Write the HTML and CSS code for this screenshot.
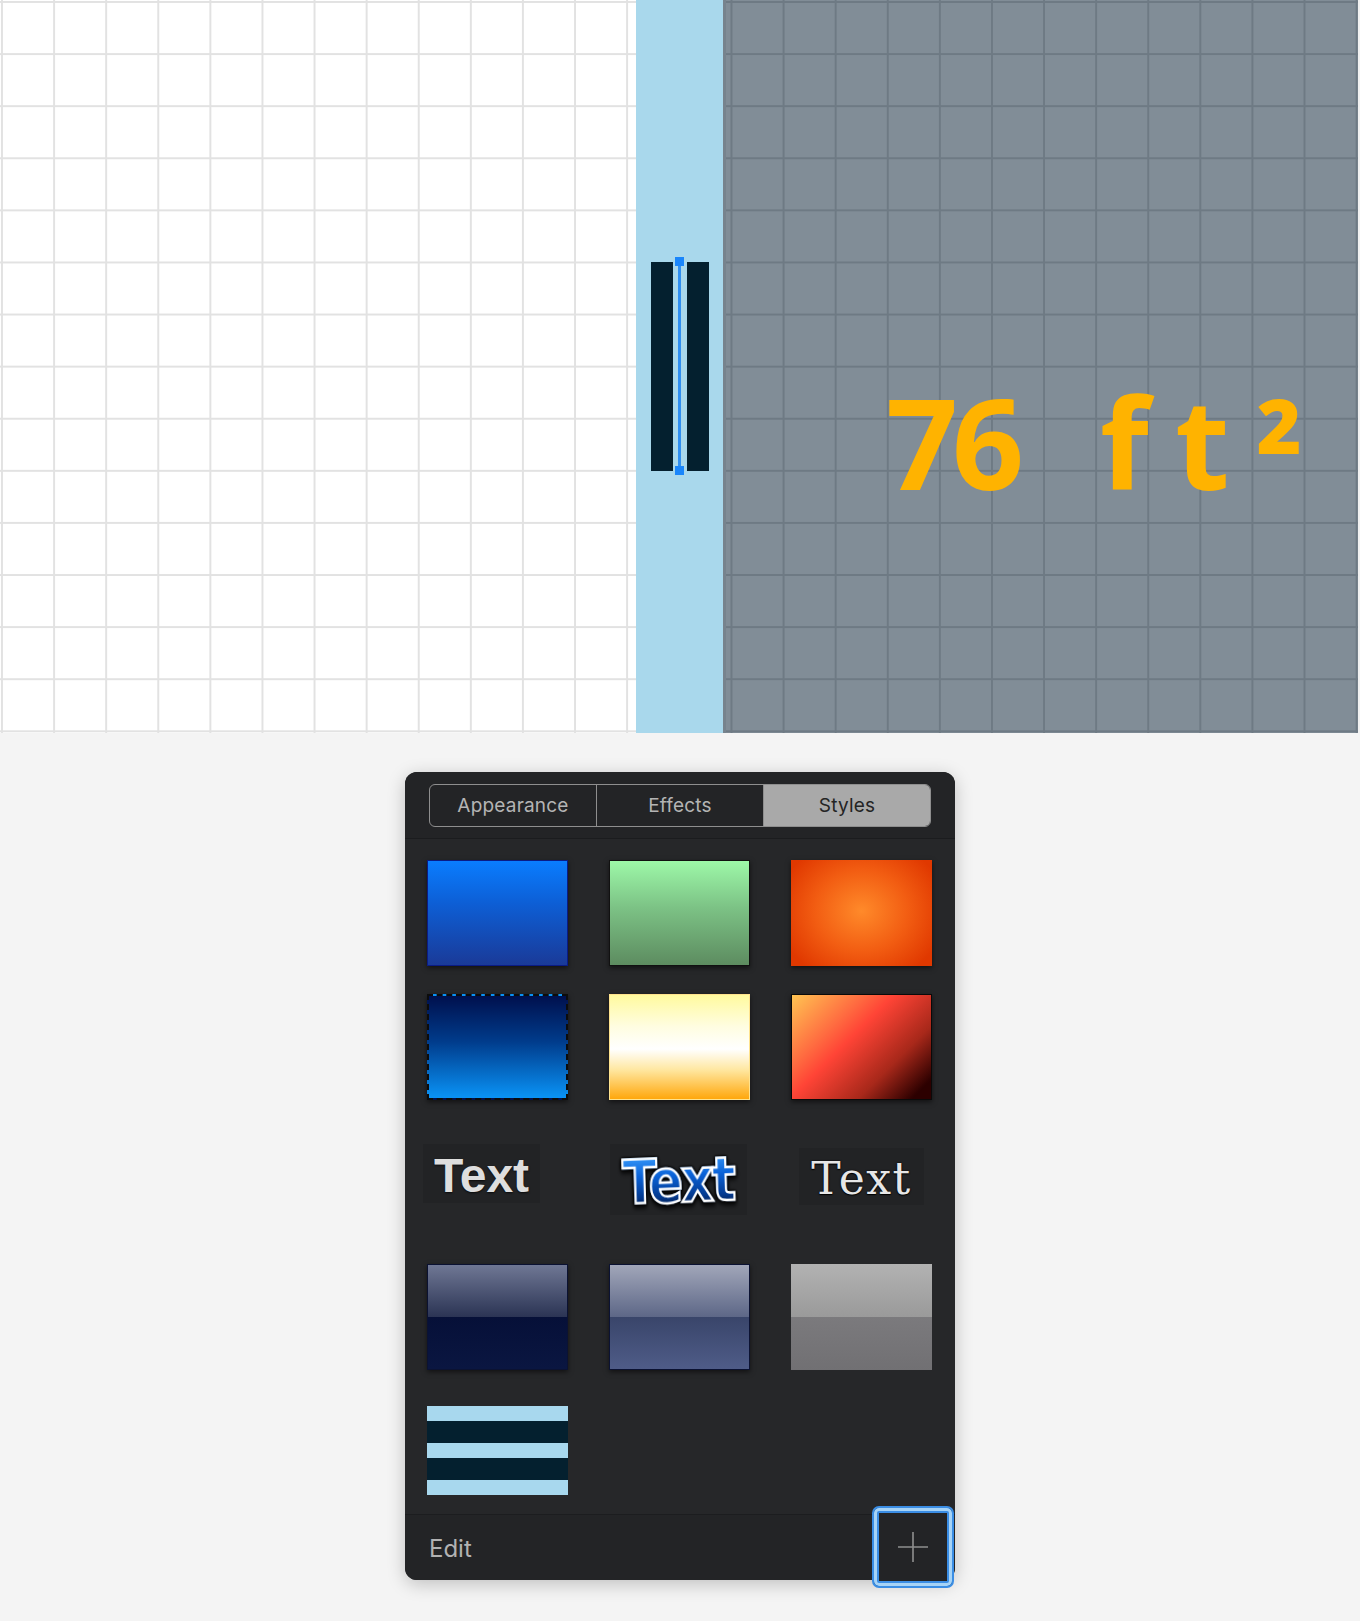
FILE: index.html
```html
<!DOCTYPE html>
<html lang="en">
<head>
<meta charset="utf-8">
<title>Styles</title>
<link rel="stylesheet" href="styles.css">
</head>
<body>
<div class="canvas">
  <div class="floor"></div>
  <div class="wall-zone">
    <div class="wall">
      <div class="wall-bar"></div>
      <div class="wall-bar"></div>
      <div class="sel-line"></div>
      <div class="handle handle-top"></div>
      <div class="handle handle-bottom"></div>
    </div>
  </div>
  <div class="room"></div>
  <div class="edge"></div>
  <div class="area-label"><span class="num">76</span><span class="unit">ft</span><span class="sup">²</span></div>
</div>

<div class="panel">
  <div class="panel-head">
    <div class="segmented">
      <div class="seg">Appearance</div>
      <div class="seg">Effects</div>
      <div class="seg seg-on">Styles</div>
    </div>
  </div>
  <div class="panel-body">
    <div class="swatches">
      <div class="sw sw-blue"></div>
      <div class="sw sw-green"></div>
      <div class="sw sw-orange"></div>
      <div class="sw sw-deep"></div>
      <div class="sw sw-cream"></div>
      <div class="sw sw-fire"></div>
      <div class="cell cell-1"><div class="tbox tbox-1"><span class="t-bold">Text</span></div></div>
      <div class="cell cell-2"><div class="tbox tbox-2"><span class="t-comic">Text</span></div></div>
      <div class="cell cell-3"><div class="tbox tbox-3"><span class="t-serif">Text</span></div></div>
      <div class="sw sw-navy"></div>
      <div class="sw sw-slate"></div>
      <div class="sw sw-grey"></div>
      <div class="cell cell-stripes"><div class="stripes"><div class="st st-l"></div><div class="st st-d"></div><div class="st st-l"></div><div class="st st-d"></div><div class="st st-l"></div></div></div>
    </div>
  </div>
  <div class="panel-foot">
    <span class="edit">Edit</span>
    <div class="add-btn">
      <svg width="32" height="32" viewBox="0 0 32 32"><path d="M16 1v30M1 16h30" stroke="#8f8f8f" stroke-width="1.6" fill="none"/></svg>
    </div>
  </div>
</div>
</body>
</html>
```

FILE: styles.css
```css
html, body {
  margin: 0;
  padding: 0;
}
body {
  background: #f4f4f4;
  width: 1360px;
  height: 1621px;
  overflow: hidden;
  font-family: Inter, "Noto Sans", sans-serif;
}

.canvas {
  position: relative;
  display: flex;
  width: 1360px;
  height: 733px;
  background: #fff;
}
.floor {
  flex: 0 0 636px;
  background-color: #fff;
  background-image:
    linear-gradient(90deg, #e2e2e2 2px, transparent 2px),
    linear-gradient(180deg, #e2e2e2 2px, transparent 2px);
  background-size: 52.1px 52.1px;
  background-position: 1px 1px;
}
.wall-zone {
  position: relative;
  flex: 0 0 87px;
  background: #a9d8ec;
}
.room {
  flex: 0 0 635px;
  background-color: #818d97;
  background-image:
    linear-gradient(90deg, #6e7a84 2px, transparent 2px),
    linear-gradient(180deg, #6e7a84 2px, transparent 2px);
  background-size: 52.1px 52.1px;
  background-position: 7.5px 1px;
  box-shadow: inset 3px 0 0 #77838d;
}
.edge {
  flex: 1;
  background: #f2f2f2;
}

.wall {
  position: absolute;
  left: 15px;
  top: 262px;
  width: 58px;
  height: 209px;
  display: flex;
  justify-content: space-between;
}
.wall-bar {
  width: 22px;
  height: 100%;
  background: #04202f;
}
.sel-line {
  position: absolute;
  left: 27px;
  top: 0;
  width: 3px;
  height: 100%;
  background: #2f8ff2;
}
.handle {
  position: absolute;
  left: 24px;
  width: 9px;
  height: 9px;
  background: #1a86fb;
}
.handle-top { top: -5px; }
.handle-bottom { bottom: -4px; }

.area-label {
  position: absolute;
  left: 886px;
  top: 378px;
  display: flex;
  align-items: flex-start;
  font-family: "Open Sans", sans-serif;
  font-weight: 700;
  font-size: 126px;
  line-height: 126px;
  color: #ffb300;
  white-space: nowrap;
}
.area-label .num {
  letter-spacing: -6px;
}
.area-label .unit {
  margin-left: 82px;
  letter-spacing: 26px;
}
.area-label .sup {
  margin-top: 16px;
}

/* ---------- Panel ---------- */
.panel {
  position: relative;
  width: 550px;
  height: 808px;
  margin: 39px auto 0;
  border-radius: 12px;
  background: #262729;
  box-shadow: 0 4px 18px rgba(0, 0, 0, 0.22);
  display: flex;
  flex-direction: column;
}
.panel-head {
  padding: 12px 24px 11px;
  background: #232426;
  border-radius: 12px 12px 0 0;
  border-bottom: 1px solid #1b1c1e;
}
.segmented {
  display: flex;
  height: 43px;
  box-sizing: border-box;
  border: 1.5px solid #8e8e8e;
  border-radius: 6px;
  overflow: hidden;
}
.seg {
  flex: 1;
  display: flex;
  align-items: center;
  justify-content: center;
  color: #b4b4b4;
  font-size: 19px;
  letter-spacing: 0.2px;
}
.seg + .seg {
  border-left: 1.5px solid #8e8e8e;
}
.seg-on {
  background: #a9a9a9;
  color: #242424;
}

.panel-body {
  flex: 1;
  padding: 21px 24px 10px 22px;
}
.swatches {
  display: grid;
  grid-template-columns: repeat(3, 141px);
  grid-template-rows: 106px 106px 108px 106px 106px;
  column-gap: 41px;
  row-gap: 28px;
}
.sw {
  box-sizing: border-box;
  box-shadow: 0 2px 5px rgba(0, 0, 0, 0.55);
}
.sw-blue {
  background: linear-gradient(180deg, #0a7dff 0%, #0d5fd6 40%, #1a3a98 100%);
  border: 1.5px solid #0a1c86;
}
.sw-green {
  background: linear-gradient(180deg, #9df8a8 0%, #7cc285 45%, #5d8c60 100%);
  border: 1.5px solid #111;
}
.sw-orange {
  background: radial-gradient(ellipse 60% 70% at 50% 48%, #ff8a2a 0%, #f25d12 55%, #e03800 100%);
}
.sw-deep {
  background: linear-gradient(180deg, #00104d 0%, #003c8c 45%, #0a93f6 100%);
  border: 2px dashed #0c0c0c;
}
.sw-cream {
  background: linear-gradient(180deg, #fffa9e 0%, #fffde0 30%, #ffffff 52%, #ffe7a0 72%, #ffa70c 100%);
  border: 1.5px solid #ffe38e;
}
.sw-fire {
  background: linear-gradient(135deg, #ffc452 0%, #ff6a40 30%, #ff4436 42%, #a8281a 70%, #2c0000 92%, #2c0000 100%);
  border: 1.5px solid #0a0a0a;
}
.sw-navy {
  background:
    linear-gradient(180deg, #6f7794 0%, #2b3454 100%) top / 100% 50% no-repeat,
    linear-gradient(180deg, #061038 0%, #0a1641 100%) bottom / 100% 50% no-repeat;
  border: 1.5px solid #0b1232;
}
.sw-slate {
  background:
    linear-gradient(180deg, #a1a6b9 0%, #5d6787 100%) top / 100% 50% no-repeat,
    linear-gradient(180deg, #39456a 0%, #4f5c88 100%) bottom / 100% 50% no-repeat;
  border: 1.5px solid #0b1232;
}
.sw-grey {
  box-shadow: none;
  background:
    linear-gradient(180deg, #b2b2b2 0%, #9a9a9a 100%) top / 100% 50% no-repeat,
    linear-gradient(180deg, #7b7a7d 0%, #717073 100%) bottom / 100% 50% no-repeat;
}

.cell {
  display: flex;
  align-items: flex-start;
}
.tbox {
  display: flex;
  align-items: center;
  justify-content: center;
  background: #222325;
}
.tbox-1 {
  margin: 16px 0 0 -4px;
  width: 117px;
  height: 59px;
}
.tbox-2 {
  margin: 16px 0 0 1px;
  width: 137px;
  height: 71px;
}
.tbox-3 {
  margin: 20px 0 0 8px;
  width: 125px;
  height: 57px;
}
.t-bold {
  font-family: "Liberation Sans", Arial, sans-serif;
  font-weight: 700;
  font-size: 48px;
  line-height: 1;
  color: #dedede;
  text-shadow: 0 1px 2px rgba(0, 0, 0, 0.7);
  margin-top: 4px;
}
.t-comic {
  display: inline-block;
  font-family: "DejaVu Sans", sans-serif;
  font-weight: 700;
  font-size: 60px;
  line-height: 1;
  letter-spacing: -2px;
  transform: scaleX(0.84) rotate(-2deg);
  background: linear-gradient(180deg, #3ea2ff 0%, #0a62d8 40%, #043a90 75%, #021030 100%);
  -webkit-background-clip: text;
  background-clip: text;
  -webkit-text-fill-color: transparent;
  -webkit-text-stroke: 2.5px #ffffff;
  filter: drop-shadow(0 0 1px #000) drop-shadow(0 0 1px #000) drop-shadow(0 3px 2px rgba(0, 0, 0, 0.8));
  margin-top: 2px;
}
.t-serif {
  font-family: "DejaVu Serif", "Liberation Serif", serif;
  font-size: 44px;
  line-height: 1;
  letter-spacing: 1.5px;
  color: #e6e6e6;
  text-shadow: 0 0 2px #000, 0 1px 1px #000;
  margin-top: 4px;
}

.cell-stripes {
  align-items: center;
}
.stripes {
  width: 141px;
  height: 90px;
  display: flex;
  flex-direction: column;
}
.st-l {
  height: 15px;
  background: #a8d8ee;
}
.st-d {
  height: 22px;
  background: #04202f;
}

.panel-foot {
  position: relative;
  height: 66px;
  box-sizing: border-box;
  border-top: 1px solid #1c1d1f;
  background: #232426;
  border-radius: 0 0 12px 12px;
  display: flex;
  align-items: center;
  padding-left: 24px;
}
.edit {
  color: #b2b2b2;
  font-size: 24px;
  margin-top: 2px;
}
.add-btn {
  position: absolute;
  right: 1px;
  top: -9px;
  width: 82px;
  height: 82px;
  box-sizing: border-box;
  border-radius: 7px;
  background: #232426;
  border: 2px solid #3a8de4;
  box-shadow: inset 0 0 0 3px #a6d3f6, inset 0 0 0 5px #3a8de4;
  display: flex;
  align-items: center;
  justify-content: center;
}
```
